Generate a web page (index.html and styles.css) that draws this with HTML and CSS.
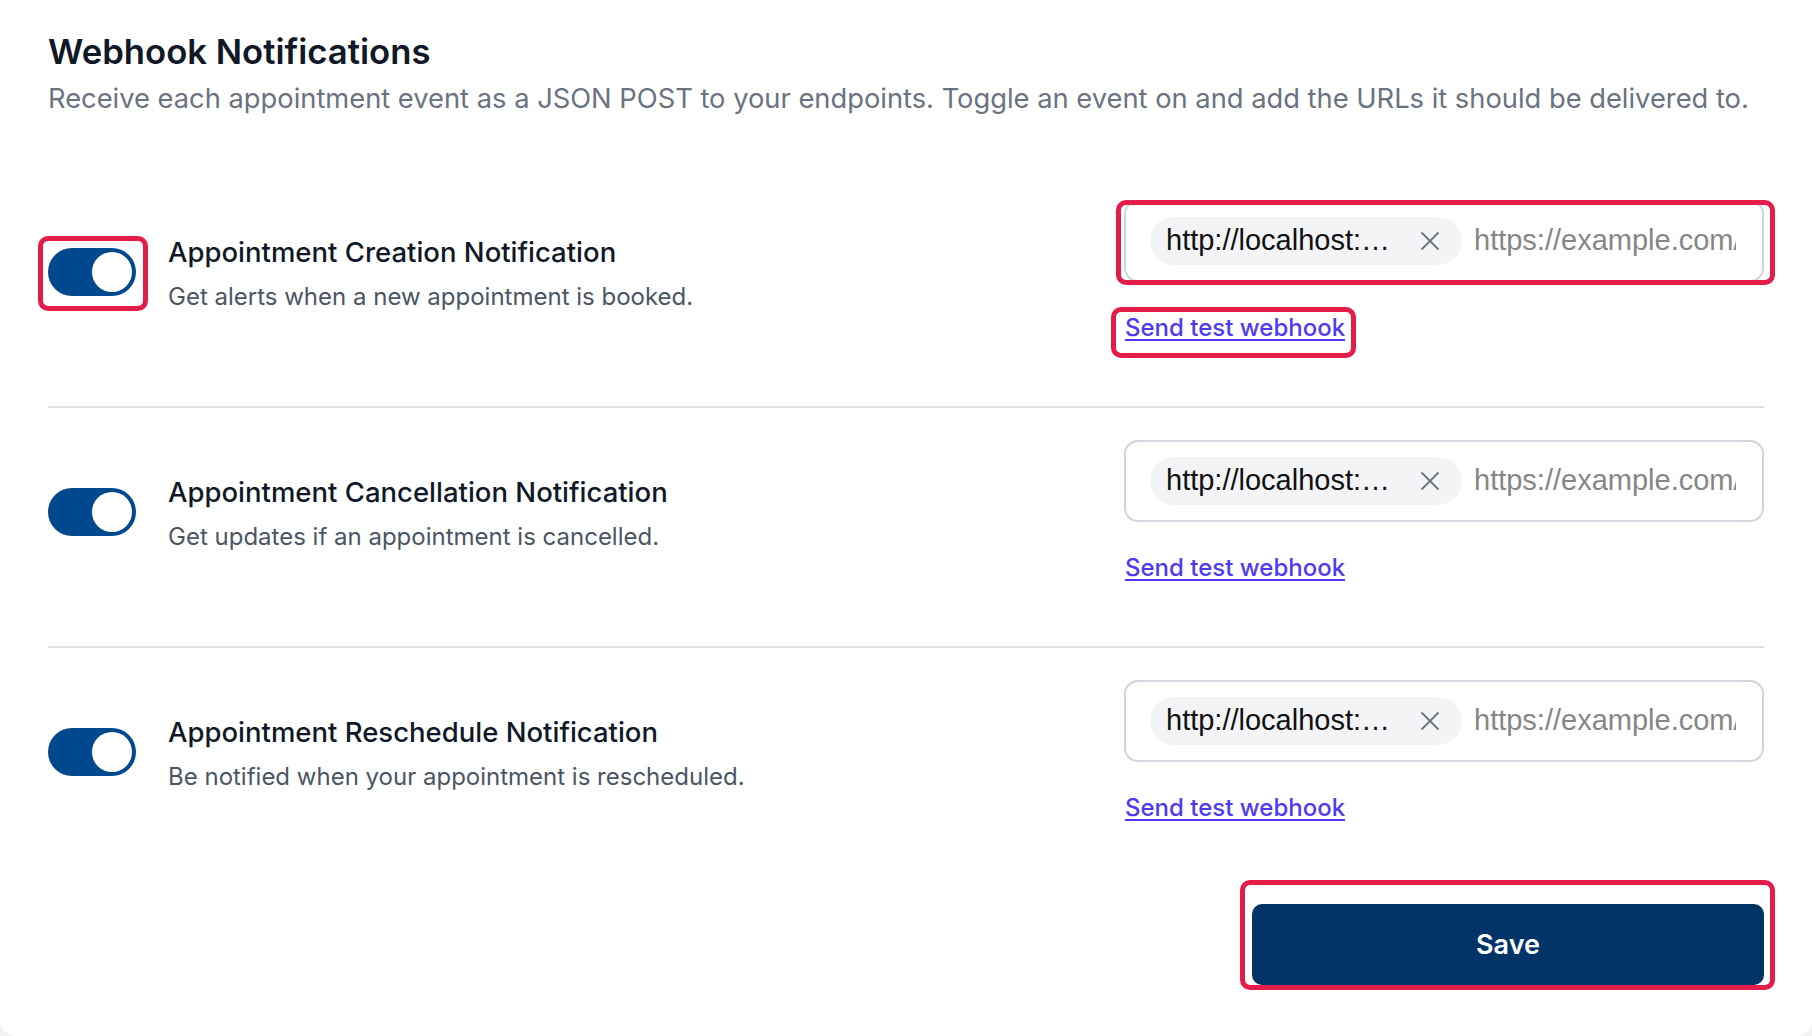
FILE: index.html
```html
<!DOCTYPE html>
<html lang="en">
<head>
    <meta charset="UTF-8">
    <meta name="viewport" content="width=device-width, initial-scale=1.0">
    <title>Webhook Notifications</title>
    <link rel="stylesheet" href="styles.css">
</head>
<body>
    <div class="card">
        <h1>Webhook Notifications</h1>
        <p class="intro">Receive each appointment event as a JSON POST to your endpoints. Toggle an event on and add the URLs it should be delivered to.</p>

        <div class="events">
            <div class="event">
                <div class="event-info">
                    <button class="switch marked mark-switch" role="switch" aria-checked="true"><span class="knob"></span></button>
                    <div class="event-text">
                        <div class="event-title">Appointment Creation Notification</div>
                        <div class="event-sub">Get alerts when a new appointment is booked.</div>
                    </div>
                </div>
                <div class="event-urls">
                    <div class="url-box marked mark-box">
                        <span class="chip">
                            <span class="chip-text">http://localhost:3000/webhooks/created</span>
                            <svg class="chip-x" viewBox="0 0 24 24" width="24" height="24"><path d="M3.5 3.5L20.5 20.5M20.5 3.5L3.5 20.5"/></svg>
                        </span>
                        <input type="text" class="url-input" placeholder="https://example.com/webhook">
                    </div>
                    <a href="#" class="test-link marked mark-link">Send test webhook</a>
                </div>
            </div>

            <div class="event">
                <div class="event-info">
                    <button class="switch" role="switch" aria-checked="true"><span class="knob"></span></button>
                    <div class="event-text">
                        <div class="event-title">Appointment Cancellation Notification</div>
                        <div class="event-sub">Get updates if an appointment is cancelled.</div>
                    </div>
                </div>
                <div class="event-urls">
                    <div class="url-box">
                        <span class="chip">
                            <span class="chip-text">http://localhost:3000/webhooks/cancelled</span>
                            <svg class="chip-x" viewBox="0 0 24 24" width="24" height="24"><path d="M3.5 3.5L20.5 20.5M20.5 3.5L3.5 20.5"/></svg>
                        </span>
                        <input type="text" class="url-input" placeholder="https://example.com/webhook">
                    </div>
                    <a href="#" class="test-link">Send test webhook</a>
                </div>
            </div>

            <div class="event">
                <div class="event-info">
                    <button class="switch" role="switch" aria-checked="true"><span class="knob"></span></button>
                    <div class="event-text">
                        <div class="event-title">Appointment Reschedule Notification</div>
                        <div class="event-sub">Be notified when your appointment is rescheduled.</div>
                    </div>
                </div>
                <div class="event-urls">
                    <div class="url-box">
                        <span class="chip">
                            <span class="chip-text">http://localhost:3000/webhooks/rescheduled</span>
                            <svg class="chip-x" viewBox="0 0 24 24" width="24" height="24"><path d="M3.5 3.5L20.5 20.5M20.5 3.5L3.5 20.5"/></svg>
                        </span>
                        <input type="text" class="url-input" placeholder="https://example.com/webhook">
                    </div>
                    <a href="#" class="test-link">Send test webhook</a>
                </div>
            </div>
        </div>

        <div class="actions">
            <button class="save-btn marked mark-save">Save</button>
        </div>
    </div>
</body>
</html>
```

FILE: styles.css
```css
html, body {
    margin: 0;
    padding: 0;
}

body {
    font-family: Inter, "Noto Sans", sans-serif;
    background-color: #f1f2f4;
}

.card {
    box-sizing: border-box;
    min-height: 100vh;
    padding: 31px 48px 0;
    background-color: white;
    border-radius: 0 0 16px 16px;
}

h1 {
    margin: 0;
    font-size: 34.7px;
    line-height: 1.2;
    font-weight: 600;
    color: #111827;
}

.intro {
    margin: 6px 0 0;
    font-size: 27.3px;
    line-height: 1.5;
    color: #6b7280;
}

.events {
    margin-top: 48px;
}

.event {
    display: flex;
    align-items: center;
    justify-content: space-between;
    padding: 32px 0 62px;
    border-bottom: 2px solid #dcdfe4;
}

.event:last-child {
    border-bottom: none;
}

.event-info {
    display: flex;
    align-items: center;
    gap: 32px;
}

/* toggle */
.switch {
    position: relative;
    width: 88px;
    height: 48px;
    padding: 4px;
    border: none;
    border-radius: 24px;
    background-color: #00498f;
    display: flex;
    justify-content: flex-end;
    cursor: pointer;
    flex-shrink: 0;
}

.knob {
    width: 40px;
    height: 40px;
    border-radius: 50%;
    background-color: white;
}

.event-text {
    padding-top: 3px;
}

.event-title {
    font-size: 27.5px;
    line-height: 36px;
    font-weight: 500;
    color: #111827;
}

.event-sub {
    margin-top: 10px;
    font-size: 24px;
    line-height: 33px;
    color: #4b5563;
}

.event-urls {
    width: 640px;
    flex-shrink: 0;
}

.url-box {
    position: relative;
    box-sizing: border-box;
    height: 82px;
    display: flex;
    align-items: center;
    padding: 0 26px 0 24px;
    border: 2px solid #d1d5db;
    border-radius: 14px;
    font-family: "Liberation Sans", Arial, sans-serif;
    font-size: 29px;
}

.chip {
    display: flex;
    align-items: center;
    height: 48px;
    padding: 0 20px 0 16px;
    background-color: #f3f4f6;
    border-radius: 24px;
    flex-shrink: 0;
}

.chip-text {
    max-width: 226px;
    white-space: nowrap;
    overflow: hidden;
    text-overflow: ellipsis;
    color: #111;
}

.chip-x {
    margin-left: 26px;
    fill: none;
    stroke: #6b7280;
    stroke-width: 1.8;
    cursor: pointer;
}

.url-input {
    flex: 1;
    min-width: 0;
    margin-left: 12px;
    padding: 0;
    border: none;
    outline: none;
    background: transparent;
    font: inherit;
    color: #111;
}

.url-input::placeholder {
    color: #868686;
}

.test-link {
    position: relative;
    display: inline-block;
    margin-top: 30px;
    margin-left: 1px;
    font-size: 24px;
    line-height: 32px;
    font-weight: 500;
    color: #4f39f6;
    text-underline-offset: 3px;
}

.actions {
    display: flex;
    justify-content: flex-end;
    margin-top: 18px;
}

.save-btn {
    position: relative;
    width: 512px;
    height: 81px;
    border: none;
    border-radius: 10px;
    background-color: #033468;
    color: white;
    font-family: Inter, "Noto Sans", sans-serif;
    font-size: 27px;
    font-weight: 600;
    cursor: pointer;
}

/* review markers drawn over the screenshot */
.marked::after {
    content: "";
    position: absolute;
    border: 5px solid #e31c4a;
    border-radius: 10px;
    pointer-events: none;
}

.mark-switch::after {
    top: -12px;
    left: -10px;
    right: -12px;
    bottom: -15px;
}

.mark-box::after {
    top: -2px;
    left: -10px;
    right: -13px;
    bottom: -5px;
}

.mark-link::after {
    top: -5px;
    left: -14px;
    right: -11px;
    bottom: -14px;
}

.mark-save::after {
    top: -24px;
    left: -12px;
    right: -11px;
    bottom: -5px;
}
```
